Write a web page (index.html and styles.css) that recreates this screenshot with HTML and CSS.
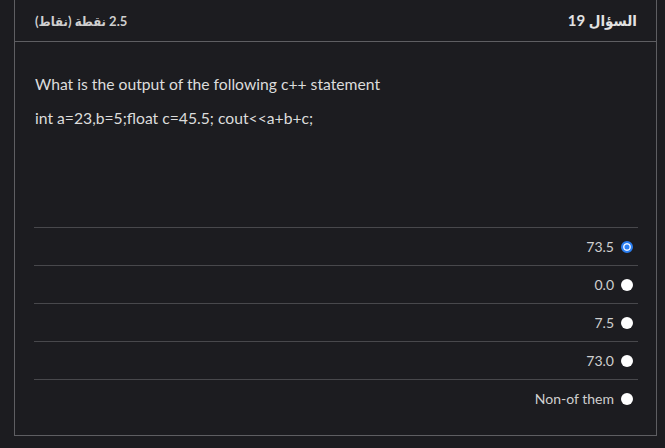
FILE: index.html
```html
<!DOCTYPE html>
<html lang="ar">
<head>
<meta charset="utf-8">
<link rel="stylesheet" href="styles.css">
</head>
<body>
<div class="card">
  <div class="header">
    <span class="qnum" dir="rtl">السؤال 19</span>
    <span class="points" dir="rtl">2.5 نقطة (نقاط)</span>
  </div>
  <div class="body">
    <p class="q">What is the output of the following c++ statement</p>
    <p class="q">int a=23,b=5;float c=45.5; cout&lt;&lt;a+b+c;</p>
    <ul class="options">
      <li class="opt"><span class="label">73.5</span><span class="radio checked"></span></li>
      <li class="opt"><span class="label">0.0</span><span class="radio"></span></li>
      <li class="opt"><span class="label">7.5</span><span class="radio"></span></li>
      <li class="opt"><span class="label">73.0</span><span class="radio"></span></li>
      <li class="opt"><span class="label">Non-of them</span><span class="radio"></span></li>
    </ul>
  </div>
</div>
</body>
</html>
```
FILE: styles.css
```css
html, body {
  margin: 0;
  padding: 0;
  background: #1c1c20;
}
body {
  font-family: Lato, "DejaVu Sans", sans-serif;
  color: #d4d4d4;
  height: 448px;
  overflow: hidden;
}
.card {
  margin: -1px 0 0 14px;
  width: 643px;
  height: 437px;
  border: 1px solid #5e5e62;
  box-sizing: border-box;
  display: flex;
  flex-direction: column;
}
.header {
  height: 42px;
  box-sizing: border-box;
  border-bottom: 1px solid #5e5e62;
  display: flex;
  flex-direction: row-reverse;
  justify-content: space-between;
  align-items: center;
  padding: 0 19px 0 20px;
}
.qnum {
  font-family: Lato, "DejaVu Sans Condensed", sans-serif;
  font-weight: bold;
  font-size: 15px;
  color: #e2e2e2;
}
.points {
  font-family: Lato, "DejaVu Sans Condensed", sans-serif;
  font-weight: bold;
  font-size: 13px;
  color: #cfcfcf;
}
.body {
  padding: 33px 18px 0 20px;
}
.q {
  margin: 0 0 15px 0;
  font-size: 15.7px;
  line-height: 19px;
  color: #dcdcdc;
}
.options {
  list-style: none;
  margin: 99px 0 0 -1px;
  padding: 0;
}
.opt {
  height: 38px;
  box-sizing: border-box;
  border-top: 1px solid #48484c;
  display: flex;
  justify-content: flex-end;
  align-items: center;
  gap: 7px;
  padding-right: 5px;
}
.label {
  font-size: 14px;
  color: #cfcfcf;
}
.radio {
  width: 12px;
  height: 12px;
  border-radius: 50%;
  background: #ffffff;
  box-sizing: border-box;
}
.radio.checked {
  background: #2a7ef0;
  border: 2px solid #2a7ef0;
  box-shadow: inset 0 0 0 1.5px #e8f0ff;
}
```
